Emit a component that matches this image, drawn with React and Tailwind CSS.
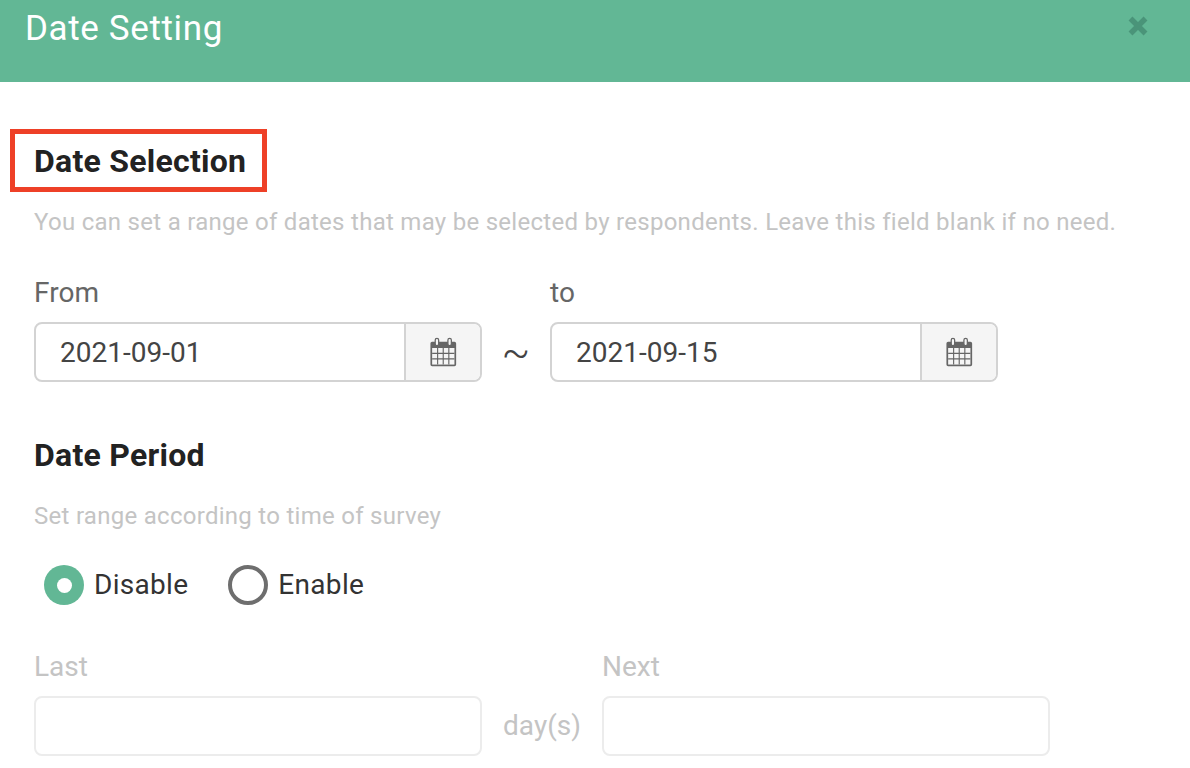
import React from 'react';

const CalendarIcon = () => (
  <svg width="32" height="32" viewBox="0 0 28 28" fill="none">
    <path d="M3 6.500a1.500 1.500 0 0 1 1.500-1.500H24a1.500 1.500 0 0 1 1.500 1.500V25a1.500 1.500 0 0 1-1.500 1.500H4.500A1.500 1.500 0 0 1 3 25z" fill="#666" />
    <rect x="4.500" y="10.500" width="19.500" height="14.500" fill="#f5f5f5" />
    <path d="M4.500 15.200h19.500M4.500 20h19.500M9.300 10.500V25M14.200 10.500V25M19.100 10.500V25" stroke="#666" strokeWidth="1" />
    <rect x="7.200" y="2" width="3" height="6.500" rx="1.500" fill="#f5f5f5" stroke="#666" strokeWidth="1.100" />
    <rect x="18.300" y="2" width="3" height="6.500" rx="1.500" fill="#f5f5f5" stroke="#666" strokeWidth="1.100" />
  </svg>
);

const DateInput = ({ value }) => (
  <div className="flex h-[60px] w-[448px] overflow-hidden rounded-lg border-2 border-[#d3d3d3] bg-white">
    <div className="flex-1 pl-[24px] text-[28px] leading-[58px] text-[#444]">{value}</div>
    <div className="flex w-[76px] items-center justify-center border-l-2 border-[#d3d3d3] bg-[#f5f5f5]">
      <CalendarIcon />
    </div>
  </div>
);

const Radio = ({ checked, label }) => (
  <div className="flex items-center gap-[10px]">
    {checked ? (
      <span className="flex h-10 w-10 items-center justify-center rounded-full bg-[#62b795]">
        <span className="h-[15px] w-[15px] rounded-full bg-white" />
      </span>
    ) : (
      <span className="h-10 w-10 rounded-full border-4 border-[#6e6e6e]" />
    )}
    <span className="text-[28px] leading-10 tracking-[0.3px] text-[#333]">{label}</span>
  </div>
);

export default function App() {
  return (
    <div className="h-[768px] w-[1190px] overflow-hidden bg-white font-['Roboto',sans-serif]">
      <div className="flex h-[82px] items-start justify-between bg-[#62b795] pl-[25px] pr-[41px]">
        <h2 className="text-[35px] font-normal leading-[58px] tracking-[0.63px] text-white">Date Setting</h2>
        <svg className="mt-[15px]" width="22" height="22" viewBox="0 0 22 22">
          <path d="M3.500 3.500l15 15M18.500 3.500l-15 15" stroke="#4a9479" strokeWidth="5.500" />
        </svg>
      </div>

      <div className="relative pl-[34px]">
        <div className="absolute left-[10px] top-[47px] h-[63px] w-[257px] border-[5px] border-[#ee4027]" />
        <h3 className="pt-[56px] text-[32px] font-bold leading-[46px] tracking-[0.25px] text-[#222]">Date Selection</h3>
        <p className="mt-[23px] text-[24px] leading-[30px] tracking-[0.28px] text-[#c4c4c4]">
          You can set a range of dates that may be selected by respondents. Leave this field blank if no need.
        </p>

        <div className="mt-[38px] flex items-end">
          <div>
            <div className="mb-[11px] text-[28px] leading-[36px] tracking-[0.1px] text-[#666]">From</div>
            <DateInput value="2021-09-01" />
          </div>
          <div className="flex h-[60px] w-[68px] items-center justify-center text-[42px] font-light text-[#444]">~</div>
          <div>
            <div className="mb-[11px] text-[28px] leading-[36px] tracking-[0.1px] text-[#666]">to</div>
            <DateInput value="2021-09-15" />
          </div>
        </div>

        <h3 className="mt-[50px] text-[32px] font-bold leading-[46px] tracking-[0.25px] text-[#222]">Date Period</h3>
        <p className="mt-[23px] text-[24px] leading-[30px] tracking-[0.28px] text-[#c4c4c4]">
          Set range according to time of survey
        </p>

        <div className="mt-[34px] flex gap-[40px] pl-[10px]">
          <Radio checked label="Disable" />
          <Radio label="Enable" />
        </div>

        <div className="mt-[44px] flex items-end">
          <div>
            <div className="mb-[11px] text-[28px] leading-[36px] text-[#c4c4c4]">Last</div>
            <div className="h-[60px] w-[448px] rounded-lg border-2 border-[#ececec]" />
          </div>
          <div className="flex h-[60px] w-[120px] items-center justify-center text-[28px] text-[#c4c4c4]">day(s)</div>
          <div>
            <div className="mb-[11px] text-[28px] leading-[36px] text-[#c4c4c4]">Next</div>
            <div className="h-[60px] w-[448px] rounded-lg border-2 border-[#ececec]" />
          </div>
        </div>
      </div>
    </div>
  );
}
